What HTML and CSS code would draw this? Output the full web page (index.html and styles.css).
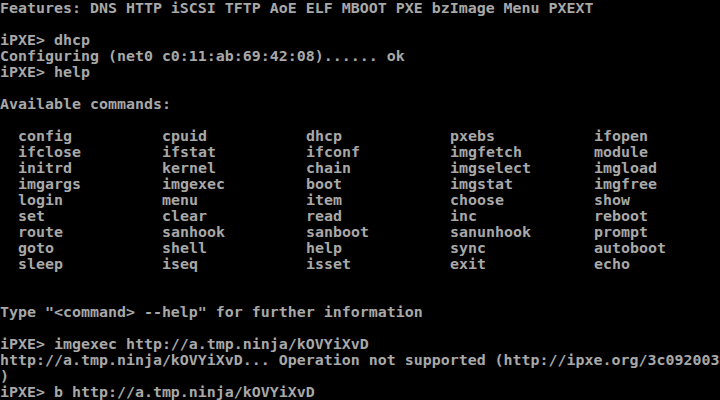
FILE: index.html
```html
<!DOCTYPE html>
<html>
<head>
<meta charset="utf-8">
<link rel="stylesheet" href="styles.css">
</head>
<body>
<div class="screen">
  <div class="line">Features: DNS HTTP iSCSI TFTP AoE ELF MBOOT PXE bzImage Menu PXEXT</div>
  <div class="line"></div>
  <div class="line">iPXE&gt; dhcp</div>
  <div class="line">Configuring (net0 c0:11:ab:69:42:08)...... ok</div>
  <div class="line">iPXE&gt; help</div>
  <div class="line"></div>
  <div class="line">Available commands:</div>
  <div class="line"></div>
  <div class="commands">
    <span>config</span><span>cpuid</span><span>dhcp</span><span>pxebs</span><span>ifopen</span>
    <span>ifclose</span><span>ifstat</span><span>ifconf</span><span>imgfetch</span><span>module</span>
    <span>initrd</span><span>kernel</span><span>chain</span><span>imgselect</span><span>imgload</span>
    <span>imgargs</span><span>imgexec</span><span>boot</span><span>imgstat</span><span>imgfree</span>
    <span>login</span><span>menu</span><span>item</span><span>choose</span><span>show</span>
    <span>set</span><span>clear</span><span>read</span><span>inc</span><span>reboot</span>
    <span>route</span><span>sanhook</span><span>sanboot</span><span>sanunhook</span><span>prompt</span>
    <span>goto</span><span>shell</span><span>help</span><span>sync</span><span>autoboot</span>
    <span>sleep</span><span>iseq</span><span>isset</span><span>exit</span><span>echo</span>
  </div>
  <div class="line"></div>
  <div class="line"></div>
  <div class="line">Type "&lt;command&gt; --help" for further information</div>
  <div class="line"></div>
  <div class="line">iPXE&gt; imgexec http://a.tmp.ninja/kOVYiXvD</div>
  <div class="line">http://a.tmp.ninja/kOVYiXvD... Operation not supported (http://ipxe.org/3c092003</div>
  <div class="line">)</div>
  <div class="line">iPXE&gt; b http://a.tmp.ninja/kOVYiXvD</div>
</div>
</body>
</html>
```

FILE: styles.css
```css
html, body {
  margin: 0;
  padding: 0;
  background: #000;
}
body {
  width: 720px;
  height: 400px;
  overflow: hidden;
}
.screen {
  font-family: "DejaVu Sans Mono", "Liberation Mono", monospace;
  font-size: 14.95px;
  font-weight: bold;
  line-height: 16px;
  color: #a8a8a8;
}
.line {
  height: 16px;
  white-space: pre;
}
.commands {
  display: grid;
  grid-template-columns: repeat(5, 144px);
  grid-auto-rows: 16px;
  padding-left: 18px;
}
```
